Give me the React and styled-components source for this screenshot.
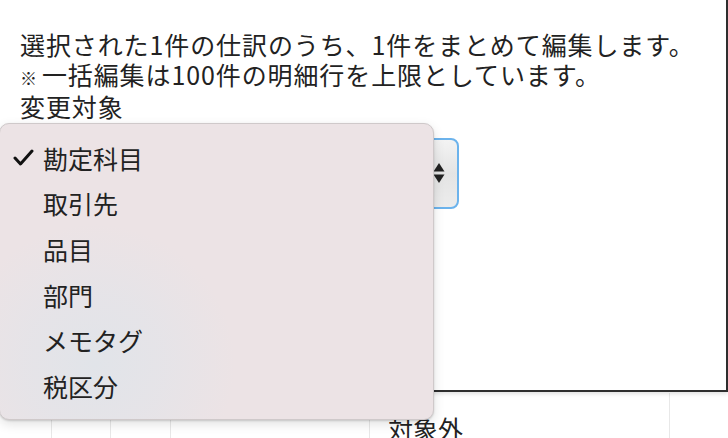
import React from "react";
import styled, { createGlobalStyle } from "styled-components";

const Global = createGlobalStyle`
  html, body { margin: 0; padding: 0; background: #fff; }
  body { font-family: "Noto Sans CJK JP", "Noto Sans", sans-serif; color: #222; overflow: hidden; }
  * { box-sizing: border-box; }
`;

const Page = styled.div`
  position: relative;
  width: 728px;
  height: 438px;
  overflow: hidden;
  background: #fff;
`;

const Backdrop = styled.div`
  display: flex;
  flex-direction: column;
  padding-top: 393px;
`;

const Row = styled.div`
  display: grid;
  grid-template-columns: 52px 59px 60px 199px 300px 1fr;
  height: 60px;
`;

const Cell = styled.div`
  border-right: 1px solid #e8e8e8;
  font-size: 25px;
  line-height: 30px;
  padding: 20px 0 0 18px;
  white-space: nowrap;
  &:last-child { border-right: none; }
`;

const Modal = styled.div`
  position: absolute;
  left: -10px;
  top: -10px;
  width: 738px;
  height: 402px;
  background: #fff;
  border-right: 2px solid #2e2e2e;
  border-bottom: 2px solid #2e2e2e;
  box-shadow: 0 2px 4px rgba(0, 0, 0, 0.12);
  padding: 40px 0 0 30px;
`;

const Line = styled.div`
  font-size: 25px;
  line-height: 29.5px;
  white-space: nowrap;
  letter-spacing: 0.9px;
`;

const Mark = styled.span`
  font-size: 17px;
  margin-right: 4px;
`;

const SelectBox = styled.div`
  margin-top: 16px;
  width: 439px;
  height: 71px;
  border: 2px solid #6cb3ec;
  border-radius: 8px;
  background: linear-gradient(#f3f3f3, #e4e4e4 50%, #ececec);
  display: flex;
  align-items: center;
  justify-content: flex-end;
  padding-right: 12px;
`;

const Arrows = styled.svg`
  width: 12px;
  height: 24px;
`;

const Menu = styled.div`
  position: absolute;
  left: -1px;
  top: 123px;
  width: 435px;
  height: 297px;
  border-radius: 10px;
  border: 1px solid #cfc9ca;
  background:
    radial-gradient(circle at 95px 240px, rgba(225, 228, 233, 1) 0, rgba(227, 228, 233, 0.7) 70px, rgba(236, 227, 229, 0) 140px),
    #ece3e5;
  box-shadow: 0 4px 12px rgba(0, 0, 0, 0.12), 0 1px 2px rgba(0, 0, 0, 0.15);
  padding: 11px 0 0 0;
  display: flex;
  flex-direction: column;
`;

const Item = styled.div`
  height: 45.6px;
  display: flex;
  align-items: center;
  font-size: 25px;
  color: #222;
  padding-left: 13px;
`;

const CheckSlot = styled.span`
  width: 30px;
  display: inline-flex;
  align-items: center;
`;

const Check = () => (
  <svg width="21" height="17" viewBox="0 0 21 17">
    <path d="M2 9 L7.5 15 L19 2" fill="none" stroke="#111" strokeWidth="3" strokeLinecap="round" strokeLinejoin="round" />
  </svg>
);

const items = ["勘定科目", "取引先", "品目", "部門", "メモタグ", "税区分"];

export default function App() {
  return (
    <Page>
      <Global />
      <Backdrop>
        <Row>
          <Cell />
          <Cell />
          <Cell />
          <Cell />
          <Cell>対象外</Cell>
          <Cell />
        </Row>
      </Backdrop>
      <Modal>
        <Line>選択された1件の仕訳のうち、1件をまとめて編集します。</Line>
        <Line><Mark>※</Mark>一括編集は100件の明細行を上限としています。</Line>
        <Line>変更対象</Line>
        <SelectBox>
          <Arrows viewBox="0 0 12 24">
            <path d="M6 2 L11.5 10.5 L0.5 10.5 Z" fill="#222" />
            <path d="M6 22 L11.5 13.5 L0.5 13.5 Z" fill="#222" />
          </Arrows>
        </SelectBox>
      </Modal>
      <Menu>
        {items.map((t, i) => (
          <Item key={t}>
            <CheckSlot>{i === 0 ? <Check /> : null}</CheckSlot>
            {t}
          </Item>
        ))}
      </Menu>
    </Page>
  );
}
